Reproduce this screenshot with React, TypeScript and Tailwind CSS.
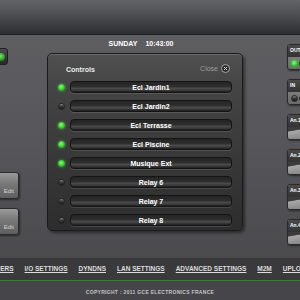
import React from 'react'

const relays = [
  { name: 'Ecl Jardin1', on: true },
  { name: 'Ecl Jardin2', on: false },
  { name: 'Ecl Terrasse', on: true },
  { name: 'Ecl Piscine', on: true },
  { name: 'Musique Ext', on: true },
  { name: 'Relay 6', on: false },
  { name: 'Relay 7', on: false },
  { name: 'Relay 8', on: false },
]

const menu = ['TIMERS', 'I/O SETTINGS', 'DYNDNS', 'LAN SETTINGS', 'ADVANCED SETTINGS', 'M2M', 'UPLOAD']

function Led({ on }: { on: boolean }) {
  return (
    <span
      className={`block w-[7px] h-[7px] rounded-full shrink-0 ${
        on
          ? 'bg-[radial-gradient(circle_at_45%_40%,#8dff7a_0%,#3fcf38_45%,#157a15_100%)] shadow-[0_0_3px_rgba(90,230,80,0.6)]'
          : 'bg-[linear-gradient(180deg,#8a8a8a_0%,#3a3a3a_45%,#1c1c1c_100%)] border border-[#222]'
      }`}
    />
  )
}

function IoBox({ label, kind }: { label: string; kind: 'out' | 'in' | 'an' }) {
  return (
    <div className="w-[30px] h-[26px] rounded-[3px] border border-[#2a2a2a] overflow-hidden flex flex-col bg-[linear-gradient(180deg,#8e8e8e,#6a6a6a)] shadow-[1px_1px_2px_rgba(0,0,0,0.5)]">
      <div className="h-[12px] bg-[linear-gradient(180deg,#4a4a4a,#333)] px-[2px] pt-[1px] text-[5px] font-bold text-white leading-[8px]">
        {label}
      </div>
      {kind === 'an' ? (
        <div className="flex-1 bg-[linear-gradient(170deg,#3c3c3c_0%,#3c3c3c_25%,#a8a8a8_30%,#7c7c7c_100%)]" />
      ) : (
        <div className="flex-1 flex items-center gap-[1px] pl-[3px]">
          <Led on={kind === 'out'} />
          <Led on={false} />
        </div>
      )}
    </div>
  )
}

function EditButton() {
  return (
    <div className="w-[40px] h-[27px] -ml-[21px] rounded-[3px] border border-[#2b2b2b] bg-[linear-gradient(180deg,#9a9a9a_0%,#7a7a7a_40%,#5e5e5e_100%)] shadow-[1px_1px_2px_rgba(0,0,0,0.5)] flex items-end justify-end pr-[4px] pb-[4px]">
      <span className="text-[6px] text-[#d4d4d4] leading-none">Edit</span>
    </div>
  )
}

export default function App() {
  return (
    <div className="w-[300px] h-[300px] overflow-hidden flex flex-col bg-[#46464a] font-['Liberation_Sans',Arial,sans-serif]">
      {/* header */}
      <div className="h-[34px] shrink-0 bg-[linear-gradient(180deg,#626367_0%,#4a4b4f_50%,#2d2e31_100%)]" />
      <div className="h-[1px] shrink-0 bg-[#1d1e20]" />

      {/* main */}
      <div className="h-[223px] shrink-0 flex bg-[linear-gradient(180deg,#5e5e61_0%,#58585c_40%,#4b4b4e_100%)]">
        {/* left column */}
        <div className="w-[47px] shrink-0 flex flex-col">
          <div className="mt-[13px] w-[20px] h-[17px] -ml-[12px] rounded-[3px] border border-[#1f1f1f] bg-[linear-gradient(180deg,#4a4a4a,#2a2a2a)] flex items-center justify-end pr-[2px]">
            <span className="block w-[8px] h-[8px] rounded-full bg-[radial-gradient(circle_at_45%_40%,#7be86a_0%,#2fa02a_55%,#135a13_100%)]" />
          </div>
          <div className="mt-[107px] flex flex-col gap-[9px]">
            <EditButton />
            <EditButton />
          </div>
        </div>

        {/* center column */}
        <div className="w-[196px] shrink-0 flex flex-col">
          <div className="h-[18px] flex items-center justify-center gap-[8px] text-[7px] font-bold text-white pr-[8px]">
            <span>SUNDAY</span>
            <span>10:43:00</span>
          </div>
          <div className="h-[178px] rounded-[5px] border border-[#1b1b1b] bg-[linear-gradient(180deg,#505050_0%,#444_20%,#383838_60%,#2d2d2d_100%)] shadow-[2px_2px_3px_rgba(0,0,0,0.45),inset_0_1px_0_rgba(255,255,255,0.15)] px-[10px]">
            <div className="h-[19px] flex items-end justify-between pl-[8px] pr-[2px]">
              <span className="text-[7px] font-bold text-[#ececec] leading-none">Controls</span>
              <span className="flex items-center gap-[3px]">
                <span className="text-[7px] text-[#9c9c9c] leading-none">Close</span>
                <span className="w-[9px] h-[9px] rounded-full bg-[#2a2a2a] border border-[#a8a8a8] flex items-center justify-center">
                  <svg width="5" height="5" viewBox="0 0 5 5">
                    <path d="M1 1L4 4M4 1L1 4" stroke="#cfcfcf" strokeWidth="1" />
                  </svg>
                </span>
              </span>
            </div>
            <div className="mt-[8px] flex flex-col gap-[7px]">
              {relays.map((r) => (
                <div key={r.name} className="flex items-center gap-[5px]">
                  <Led on={r.on} />
                  <div className="w-[162px] h-[12px] rounded-[4px] border border-[#141414] bg-[linear-gradient(180deg,#242424_0%,#2e2e2e_45%,#4a4a4a_65%,#3a3a3a_82%,#1e1e1e_100%)] shadow-[0_1px_0_rgba(255,255,255,0.12)] flex items-center justify-center">
                    <span className="text-[7px] font-bold text-white leading-none">{r.name}</span>
                  </div>
                </div>
              ))}
            </div>
          </div>
        </div>

        {/* right column */}
        <div className="ml-[44px] pt-[9px] flex flex-col gap-[9px]">
          <IoBox label="OUT" kind="out" />
          <IoBox label="IN" kind="in" />
          <IoBox label="An.1" kind="an" />
          <IoBox label="An.2" kind="an" />
          <IoBox label="An.3" kind="an" />
          <IoBox label="An.4" kind="an" />
        </div>
      </div>

      {/* nav */}
      <div className="h-[22px] shrink-0 bg-[#3a3a3d] flex items-center gap-[11px] -ml-[11px] whitespace-nowrap">
        {menu.map((m) => (
          <span key={m} className="text-[6.5px] font-bold text-[#dcdcdc] underline underline-offset-[1px]">
            {m}
          </span>
        ))}
      </div>
      <div className="h-[1px] shrink-0 bg-[#3f7a3a]" />

      {/* footer */}
      <div className="flex-1 flex items-start justify-center pt-[8px]">
        <span className="text-[5px] font-bold text-[#c4c4c4] tracking-[0.3px]">COPYRIGHT : 2011 GCE ELECTRONICS FRANCE</span>
      </div>
    </div>
  )
}
